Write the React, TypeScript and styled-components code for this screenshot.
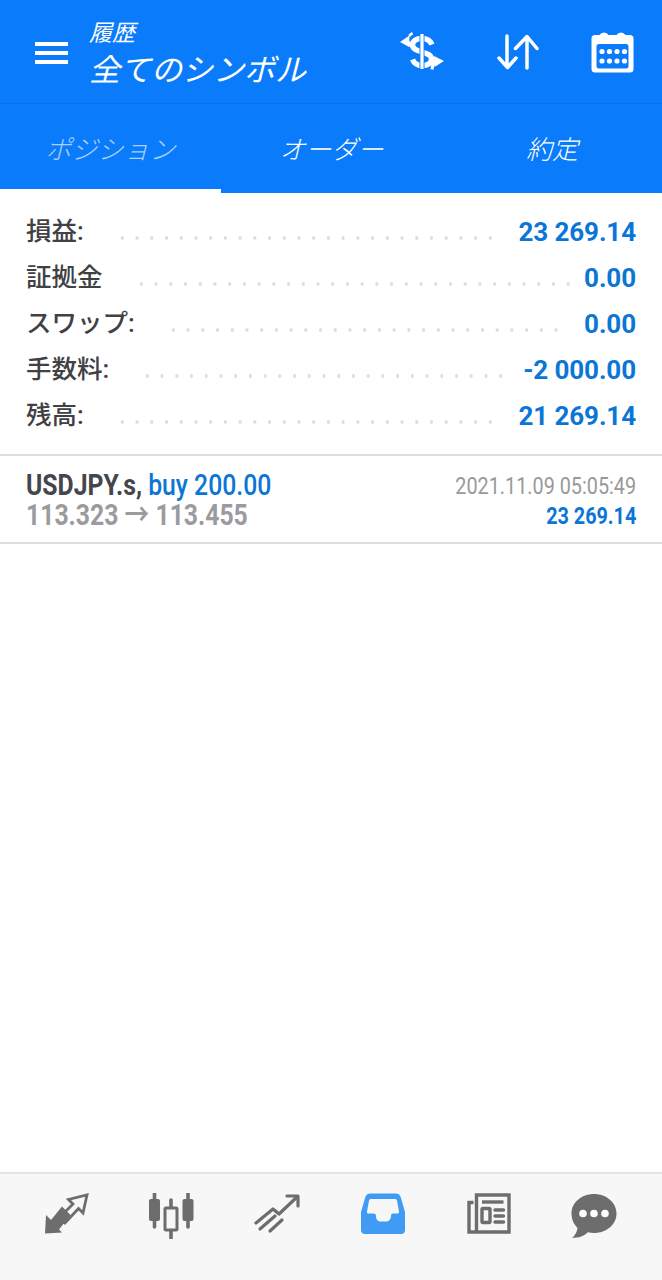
import React from "react";
import styled, { createGlobalStyle } from "styled-components";

const GlobalStyle = createGlobalStyle`
  html, body {
    margin: 0;
    padding: 0;
    background: #fff;
    font-family: Roboto, "Noto Sans CJK JP", sans-serif;
  }
  * { box-sizing: border-box; }
`;

const Page = styled.div`
  width: 662px;
  height: 1280px;
  display: flex;
  flex-direction: column;
  background: #fff;
  overflow: hidden;
`;

const TopBar = styled.header`
  height: 104px;
  display: flex;
  align-items: center;
  padding: 0 28px 0 35px;
  background: #0a7bfa;
  border-bottom: 1px solid #0a6fe6;
  color: #fff;
`;

const Burger = styled.div`
  width: 33px;
  height: 22px;
  margin-right: 21px;
  margin-top: 3px;
  display: flex;
  flex-direction: column;
  justify-content: space-between;
  span {
    display: block;
    height: 4px;
    background: #fff;
  }
`;

const TitleBlock = styled.div`
  flex: 1;
  display: flex;
  flex-direction: column;
  font-family: "Noto Sans CJK JP", sans-serif;
  font-style: italic;
  margin-top: 4px;
`;

const SubTitle = styled.div`
  font-size: 23px;
  line-height: 26px;
`;

const Title = styled.div`
  font-size: 31px;
  line-height: 44px;
  margin-top: 2px;
`;

const Actions = styled.div`
  display: flex;
  align-items: center;
  gap: 52px;
  svg { display: block; }
`;

const Tabs = styled.nav`
  height: 89px;
  display: grid;
  grid-template-columns: 221px 221px 220px;
  background: #0a7bfa;
`;

const Tab = styled.div<{ $active?: boolean }>`
  display: flex;
  align-items: center;
  justify-content: center;
  padding-top: 2px;
  font-family: "Noto Sans CJK JP", sans-serif;
  font-style: italic;
  font-size: 26px;
  font-weight: 300;
  color: ${(p) => (p.$active ? "rgba(255,255,255,0.66)" : "#fff")};
  border-bottom: 4px solid ${(p) => (p.$active ? "#fff" : "transparent")};
`;

const Summary = styled.section`
  padding: 16px 26px 15px;
  border-bottom: 2px solid #dcdcdc;
`;

const SummaryRow = styled.div`
  height: 46px;
  display: flex;
  align-items: center;
`;

const Label = styled.span`
  font-family: Roboto, "Noto Sans CJK JP", sans-serif;
  font-size: 25.5px;
  font-weight: 500;
  color: #404144;
  margin-bottom: 8px;
`;

const Leader = styled.span<{ $dots: number }>`
  width: ${(p) => p.$dots * 14.72}px;
  height: 6px;
  margin: 11px 0 0 31px;
  background-image: radial-gradient(circle at center, #dcdde0 1.5px, transparent 2px);
  background-size: 14.72px 6px;
  background-repeat: repeat-x;
`;

const Value = styled.span`
  margin-left: auto;
  font-size: 26px;
  font-weight: 700;
  color: #0b76d6;
  letter-spacing: -0.1px;
`;

const Deal = styled.article`
  height: 88px;
  display: flex;
  justify-content: space-between;
  padding: 14px 26px 0;
  border-bottom: 2px solid #dedede;
`;

const DealColumn = styled.div<{ $right?: boolean }>`
  display: flex;
  flex-direction: column;
  align-items: ${(p) => (p.$right ? "flex-end" : "flex-start")};
`;

/* the app uses Roboto Condensed, which is not installed: squeeze the regular cut */
const Condensed = styled.div<{ $right?: boolean }>`
  transform: scaleX(0.825);
  transform-origin: ${(p) => (p.$right ? "right" : "left")} center;
  white-space: pre;
`;

const DealTitle = styled(Condensed)`
  font-size: 30px;
  line-height: 30px;
  font-weight: 700;
  color: #44464b;
  span {
    font-weight: 500;
    color: #0b76d6;
  }
`;

const Prices = styled(Condensed)`
  font-size: 30px;
  line-height: 30px;
  font-weight: 700;
  color: #9a9b9e;
`;

const DealTime = styled(Condensed)`
  font-size: 24px;
  line-height: 32px;
  color: #98999b;
`;

const DealProfit = styled(Condensed)`
  font-size: 24px;
  line-height: 28px;
  font-weight: 700;
  color: #0b76d6;
`;

const Spacer = styled.div`
  flex: 1;
`;

const BottomBar = styled.footer`
  height: 108px;
  padding: 19px 15px 0 13px;
  display: grid;
  grid-template-columns: repeat(6, 1fr);
  align-items: start;
  justify-items: center;
  background: #f7f7f7;
  border-top: 2px solid #e4e4e4;
  svg { display: block; }
`;

const SwapIcon = () => (
  <svg width="46" height="40" viewBox="0 0 46 40" fill="none">
    <path d="M33 12.500c-1.500-3.500-5-6-10-6-6 0-9.500 2.500-9.500 6.500 0 4 4.500 5.500 9.500 7 5 1.500 9.500 3 9.500 7 0 4-3.500 6.500-9.500 6.500-5 0-8-2.500-9.500-6" stroke="#fff" strokeWidth="5.400" />
    <path d="M23 2v36" stroke="#0a7bfa" strokeWidth="5" />
    <path d="M23 2v35" stroke="#fff" strokeWidth="3.200" />
    <path d="M1 10l9.500-6.500-.5 11.500z" fill="#fff" />
    <path d="M8 9.500c2 .5 3 2 3.500 5" stroke="#fff" strokeWidth="3.200" />
    <path d="M10 4l3.500-3" stroke="#fff" strokeWidth="2.400" />
    <path d="M45 29l-10-5 .5 11z" fill="#fff" />
    <path d="M38 29.500c-3 0-4.500 3-5 8" stroke="#fff" strokeWidth="3.200" />
  </svg>
);

const SortIcon = () => (
  <svg width="42" height="36" viewBox="0 0 42 36" fill="none" stroke="#fff" strokeWidth="3.500" strokeLinecap="round" strokeLinejoin="round">
    <path d="M10 2v31M2 24l8.500 9.500L19 24" />
    <path d="M30 34V3M18.500 14.500L30 2.500l10 12" />
  </svg>
);

const CalendarIcon = () => (
  <svg width="43" height="42" viewBox="0 0 43 42">
    <path d="M4 4h4.500a5 4.500 0 0 1 9 0h8a5 4.500 0 0 1 9 0H39a3.500 3.500 0 0 1 3.500 3.500V38a3.500 3.500 0 0 1-3.500 3.500H4A3.500 3.500 0 0 1 .5 38V7.500A3.500 3.500 0 0 1 4 4z" fill="#fff" />
    <rect x="5.500" y="13" width="32" height="24.500" rx="2.500" fill="#0a7bfa" />
    {[11.5, 19, 26.5, 34].map((x) =>
      [20.5, 30].map((y) => <circle key={`${x}-${y}`} cx={x - 0.5} cy={y} r="2.600" fill="#fff" />)
    )}
  </svg>
);

const TradeIcon = () => (
  <svg width="46" height="42" viewBox="0 0 46 42" fill="none">
    <path d="M2 40.500L3 22l5 5L19 13.500l8.500 8.500L16 36.500l3 3z" fill="#6d6d6d" />
    <path d="M21 31L35.500 15.500 40 20 44 2 25.500 6.500 30 11 22 19" stroke="#6d6d6d" strokeWidth="2.800" strokeLinejoin="miter" />
  </svg>
);

const CandleIcon = () => (
  <svg width="46" height="46" viewBox="0 0 46 46" fill="none">
    <path d="M6.500 1v33M40 1v33M23 7v38" stroke="#6d6d6d" strokeWidth="3.600" strokeLinecap="round" />
    <rect x="1" y="6" width="11" height="22" rx="2" fill="#6d6d6d" />
    <rect x="34.500" y="6" width="11" height="22" rx="2" fill="#6d6d6d" />
    <rect x="17" y="15" width="12" height="22" rx="1" stroke="#6d6d6d" strokeWidth="3" fill="#f7f7f7" />
  </svg>
);

const ChartIcon = () => (
  <svg width="46" height="42" viewBox="0 0 46 42" fill="none" stroke="#6d6d6d" strokeWidth="3.200" strokeLinecap="round" strokeLinejoin="round">
    <path d="M2 30l17-14 6 5L43 4" />
    <path d="M33 3h11v10" />
    <path d="M6 36l15-13M16 38l12-11" />
  </svg>
);

const InboxIcon = () => (
  <svg width="46" height="42" viewBox="0 0 46 42">
    <path d="M10 0.500h26c2 0 3.500 1 4.500 3L45 19v18c0 2.500-1.500 4-4 4H5c-2.500 0-4-1.500-4-4V19L5.500 3.500c1-2 2.500-3 4.500-3z" fill="#3f9bf3" />
    <path d="M11 6h24c1 0 1.500.5 2 1.500l2 11c.3 1.500-.5 2-2 2h-3.500c-1.500 0-2.500.7-2.500 2.500 0 3-2 5.500-4.500 5.500h-6C17.500 28.500 16 26 16 23c0-1.800-1-2.500-2.500-2.500H9c-1.500 0-2.300-.5-2-2l2-11C9.500 6.500 10 6 11 6z" fill="#f7f7f7" />
  </svg>
);

const NewsIcon = () => (
  <svg width="46" height="42" viewBox="0 0 46 42" fill="none">
    <path d="M8.500 9.500H4v29.500H44V2H11.500v36" stroke="#6d6d6d" strokeWidth="3.400" />
    <path d="M17 9h21.500" stroke="#6d6d6d" strokeWidth="3.400" />
    <rect x="17" y="15.500" width="8" height="14" rx="1" stroke="#6d6d6d" strokeWidth="3.400" />
    <path d="M30 17h8.500M30 23h8.500M30 29h8.500" stroke="#6d6d6d" strokeWidth="3.400" strokeLinecap="round" />
  </svg>
);

const ChatIcon = () => (
  <svg width="46" height="46" viewBox="0 0 46 46">
    <path d="M23 1c12.500 0 22.500 8.500 22.500 19.500S35.500 40 23 40c-2 0-4-.2-6-.7C13 43 8 45 1 45c3-2.500 5-6 5.500-10C3 31.500.5 26.500.5 20.500 .5 9.500 10.500 1 23 1z" fill="#6d6d6d" />
    <circle cx="12" cy="20.500" r="3.800" fill="#fff" />
    <circle cx="23" cy="20.500" r="3.800" fill="#fff" />
    <circle cx="34" cy="20.500" r="3.800" fill="#fff" />
  </svg>
);

const rows = [
  { label: "損益:", value: "23 269.14", dots: 26 },
  { label: "証拠金", value: "0.00", dots: 30 },
  { label: "スワップ:", value: "0.00", dots: 27 },
  { label: "手数料:", value: "-2 000.00", dots: 25 },
  { label: "残高:", value: "21 269.14", dots: 26 },
];

export default function App() {
  return (
    <>
      <GlobalStyle />
      <Page>
        <TopBar>
          <Burger>
            <span />
            <span />
            <span />
          </Burger>
          <TitleBlock>
            <SubTitle>履歴</SubTitle>
            <Title>全てのシンボル</Title>
          </TitleBlock>
          <Actions>
            <SwapIcon />
            <SortIcon />
            <CalendarIcon />
          </Actions>
        </TopBar>
        <Tabs>
          <Tab $active>ポジション</Tab>
          <Tab>オーダー</Tab>
          <Tab>約定</Tab>
        </Tabs>
        <Summary>
          {rows.map((row) => (
            <SummaryRow key={row.label}>
              <Label>{row.label}</Label>
              <Leader $dots={row.dots} />
              <Value>{row.value}</Value>
            </SummaryRow>
          ))}
        </Summary>
        <Deal>
          <DealColumn>
            <DealTitle>
              USDJPY.s, <span>buy 200.00</span>
            </DealTitle>
            <Prices>113.323 → 113.455</Prices>
          </DealColumn>
          <DealColumn $right>
            <DealTime $right>2021.11.09 05:05:49</DealTime>
            <DealProfit $right>23 269.14</DealProfit>
          </DealColumn>
        </Deal>
        <Spacer />
        <BottomBar>
          <TradeIcon />
          <CandleIcon />
          <ChartIcon />
          <InboxIcon />
          <NewsIcon />
          <ChatIcon />
        </BottomBar>
      </Page>
    </>
  );
}
